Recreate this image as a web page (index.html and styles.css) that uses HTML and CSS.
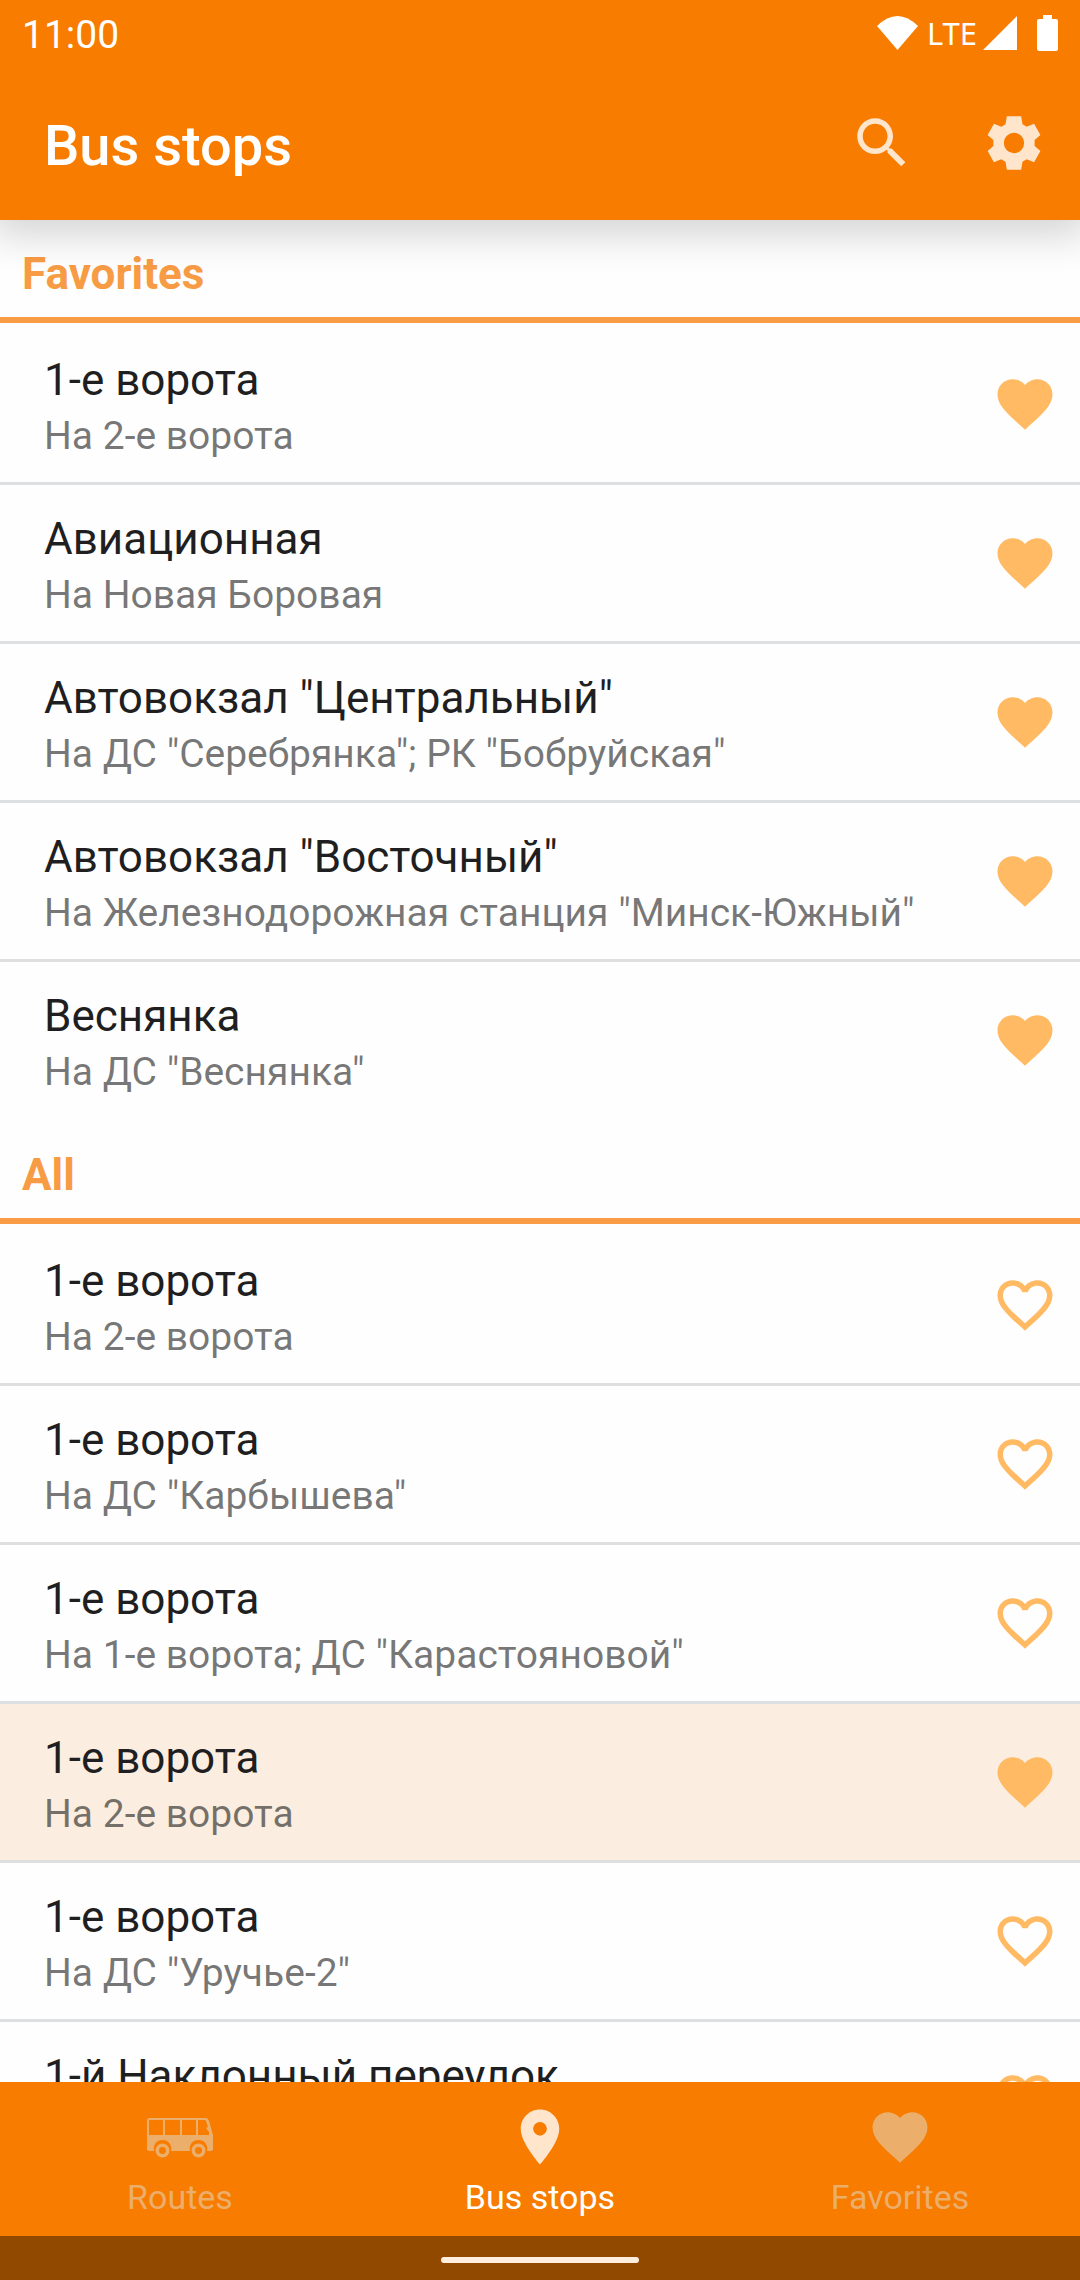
FILE: index.html
```html
<!DOCTYPE html>
<html lang="en">
<head>
<meta charset="utf-8">
<meta name="viewport" content="width=device-width, initial-scale=1">
<title>Bus stops</title>
<link rel="stylesheet" href="styles.css">
</head>
<body>
<svg class="sprite" aria-hidden="true">
  <symbol id="heart" viewBox="0 0 24 24"><path d="M12 21.35l-1.45-1.32C5.4 15.36 2 12.28 2 8.5 2 5.42 4.42 3 7.5 3c1.74 0 3.41.81 4.5 2.09C13.09 3.81 14.76 3 16.5 3 19.58 3 22 5.42 22 8.5c0 3.78-3.4 6.86-8.55 11.54L12 21.35z"/></symbol>
  <symbol id="heart-outline" viewBox="0 0 24 24"><path d="M16.5 3c-1.74 0-3.41.81-4.5 2.09C10.91 3.81 9.24 3 7.5 3 4.42 3 2 5.42 2 8.5c0 3.78 3.4 6.86 8.55 11.54L12 21.35l1.45-1.32C18.6 15.36 22 12.28 22 8.5 22 5.42 19.58 3 16.5 3zm-4.4 15.55l-.1.1-.1-.1C7.14 14.24 4 11.39 4 8.5 4 6.5 5.5 5 7.5 5c1.54 0 3.04.99 3.57 2.36h1.87C13.46 5.99 14.96 5 16.5 5c2 0 3.5 1.5 3.5 3.5 0 2.89-3.14 5.74-7.9 10.05z"/></symbol>
</svg>
<div class="app">
  <header class="top">
    <div class="status">
      <span class="clock">11:00</span>
      <div class="signals">
        <svg class="wifi" viewBox="0 0 41 34" aria-hidden="true"><path d="M0 10Q20.500-10 41 10L20.500 34z"/></svg>
        <span class="lte">LTE</span>
        <svg class="cell" viewBox="0 0 34 34" aria-hidden="true"><path d="M34 0v34H0z"/></svg>
        <svg class="battery" viewBox="0 0 21 36" aria-hidden="true"><path d="M6 0h9v4h4q2 0 2 2v28q0 2-2 2H2q-2 0-2-2V6q0-2 2-2h4z"/></svg>
      </div>
    </div>
    <div class="toolbar">
      <h1 class="title">Bus stops</h1>
      <button class="action" type="button" aria-label="Search"><svg class="icon" viewBox="0 0 24 24"><path d="M15.500 14h-.79l-.28-.27C15.410 12.590 16 11.110 16 9.500 16 5.910 13.090 3 9.500 3S3 5.910 3 9.500 5.910 16 9.500 16c1.610 0 3.090-.59 4.230-1.570l.27.28v.79l5 4.990L20.490 19l-4.990-5zm-6 0C7.010 14 5 11.990 5 9.500S7.010 5 9.500 5 14 7.010 14 9.500 11.990 14 9.500 14z"/></svg></button>
      <button class="action" type="button" aria-label="Settings"><svg class="icon" viewBox="0 0 24 24"><path fill-rule="evenodd" d="M9.400 2.300h5.200l.5 2.900 1.500.9 2.700-1.100 2.300 4.100-2.100 1.800v2.200l2.100 1.800-2.300 4.100-2.700-1.100-1.500.9-.5 2.900H9.400l-.5-2.900-1.500-.9L4.700 19l-2.300-4.100 2.100-1.800v-2.200L2.400 9.100 4.700 5l2.700 1.100 1.500-.9zM12 8.300a3.700 3.700 0 1 0 0 7.400 3.700 3.700 0 0 0 0-7.400z"/></svg></button>
    </div>
  </header>

  <main class="content">
    <section>
      <h2 class="heading">Favorites</h2>
      <ul class="stops">
        <li class="stop"><div class="names"><span class="name">1-е ворота</span><span class="to">На 2-е ворота</span></div><button class="fav" type="button" aria-label="Remove from favorites"><svg class="icon"><use href="#heart"/></svg></button></li>
        <li class="stop"><div class="names"><span class="name">Авиационная</span><span class="to">На Новая Боровая</span></div><button class="fav" type="button" aria-label="Remove from favorites"><svg class="icon"><use href="#heart"/></svg></button></li>
        <li class="stop"><div class="names"><span class="name">Автовокзал "Центральный"</span><span class="to">На ДС "Серебрянка"; РК "Бобруйская"</span></div><button class="fav" type="button" aria-label="Remove from favorites"><svg class="icon"><use href="#heart"/></svg></button></li>
        <li class="stop"><div class="names"><span class="name">Автовокзал "Восточный"</span><span class="to">На Железнодорожная станция "Минск-Южный"</span></div><button class="fav" type="button" aria-label="Remove from favorites"><svg class="icon"><use href="#heart"/></svg></button></li>
        <li class="stop"><div class="names"><span class="name">Веснянка</span><span class="to">На ДС "Веснянка"</span></div><button class="fav" type="button" aria-label="Remove from favorites"><svg class="icon"><use href="#heart"/></svg></button></li>
      </ul>
    </section>
    <section>
      <h2 class="heading">All</h2>
      <ul class="stops">
        <li class="stop"><div class="names"><span class="name">1-е ворота</span><span class="to">На 2-е ворота</span></div><button class="fav" type="button" aria-label="Add to favorites"><svg class="icon"><use href="#heart-outline"/></svg></button></li>
        <li class="stop"><div class="names"><span class="name">1-е ворота</span><span class="to">На ДС "Карбышева"</span></div><button class="fav" type="button" aria-label="Add to favorites"><svg class="icon"><use href="#heart-outline"/></svg></button></li>
        <li class="stop"><div class="names"><span class="name">1-е ворота</span><span class="to">На 1-е ворота; ДС "Карастояновой"</span></div><button class="fav" type="button" aria-label="Add to favorites"><svg class="icon"><use href="#heart-outline"/></svg></button></li>
        <li class="stop marked"><div class="names"><span class="name">1-е ворота</span><span class="to">На 2-е ворота</span></div><button class="fav" type="button" aria-label="Remove from favorites"><svg class="icon"><use href="#heart"/></svg></button></li>
        <li class="stop"><div class="names"><span class="name">1-е ворота</span><span class="to">На ДС "Уручье-2"</span></div><button class="fav" type="button" aria-label="Add to favorites"><svg class="icon"><use href="#heart-outline"/></svg></button></li>
        <li class="stop"><div class="names"><span class="name">1-й Наклонный переулок</span></div><button class="fav" type="button" aria-label="Add to favorites"><svg class="icon"><use href="#heart-outline"/></svg></button></li>
      </ul>
    </section>
  </main>

  <nav class="tabs">
    <a class="tab" href="#routes"><svg class="icon" viewBox="0 0 66 66" aria-hidden="true"><path fill-rule="evenodd" d="M3 14h56q2 0 3 3l4 14v14q0 2-2 2h-4a8.800 8.800 0 1 0-17 0H24a8.800 8.800 0 1 0-17 0H2q-2 0-2-2V17q0-3 3-3zM2 17v14h14V16H3q-1 0-1 1zM18 16v15h15V16zM35 16v15h14V16zM51 16v15h11v-3l-3-4 2-1-2-6q0-1-1-1z"/><g fill="none" stroke="currentColor" stroke-width="3.500"><circle cx="15.500" cy="46.500" r="5.200"/><circle cx="51.500" cy="46.500" r="5.200"/></g></svg><span>Routes</span></a>
    <a class="tab current" href="#stops" aria-current="page"><svg class="icon" viewBox="0 0 24 24" aria-hidden="true"><path d="M12 2C8.130 2 5 5.130 5 9c0 5.250 7 13 7 13s7-7.750 7-13c0-3.870-3.130-7-7-7zm0 9.500a2.500 2.500 0 0 1 0-5 2.500 2.500 0 0 1 0 5z"/></svg><span>Bus stops</span></a>
    <a class="tab" href="#favorites"><svg class="icon" aria-hidden="true"><use href="#heart"/></svg><span>Favorites</span></a>
  </nav>
  <div class="gesture"><span class="pill"></span></div>
</div>
</body>
</html>
```
FILE: styles.css
```css
* { box-sizing: border-box; }

body {
  margin: 0;
  background: #fefefe;
  color: #1f1f21;
  font-family: Roboto, "Noto Sans", sans-serif;
}

h1, h2, ul { margin: 0; padding: 0; }
ul { list-style: none; }

button {
  border: 0;
  padding: 0;
  background: none;
  color: inherit;
  font: inherit;
}

svg { display: block; fill: currentColor; }
.sprite { position: absolute; width: 0; height: 0; }
.icon { width: 66px; height: 66px; }

.app {
  display: flex;
  flex-direction: column;
  height: 100vh;
}

.top {
  flex: none;
  z-index: 1;
  background: #f77c00;
  color: #fff;
  box-shadow: 0 8px 36px 8px rgba(0, 0, 0, 0.16);
}

.status {
  display: flex;
  align-items: center;
  justify-content: space-between;
  height: 66px;
  padding: 0 22px;
}
.clock { padding-top: 4px; font-size: 39px; line-height: 44px; }
.signals { display: flex; align-items: center; }
.wifi { width: 41px; height: 34px; margin-right: 9px; }
.lte { font: 31px/44px "Noto Sans", sans-serif; }
.cell { width: 34px; height: 34px; margin: 0 20px 0 6px; }
.battery { width: 21px; height: 36px; }

.toolbar {
  display: flex;
  align-items: center;
  height: 154px;
  padding-left: 44px;
}
.title { flex: 1; padding-top: 6px; font-size: 56px; font-weight: 500; line-height: 66px; }
.action {
  display: grid;
  place-items: center;
  width: 132px;
  height: 132px;
  color: #ffe5cc;
}

.content { flex: 1; min-height: 0; overflow: hidden; }

.heading {
  height: 103px;
  padding: 28px 22px 0;
  border-bottom: 6px solid #fa9c45;
  color: #f89b45;
  font-size: 44px;
  font-weight: 700;
  line-height: 52px;
}

.stops { padding-top: 3px; }
.stop {
  display: flex;
  align-items: center;
  justify-content: space-between;
  height: 159px;
  padding: 0 22px 0 44px;
  border-bottom: 3px solid #dedfe1;
}
section:first-child .stop:last-child { border-color: transparent; }
.marked { background: #fbeee1; }
.names {
  display: flex;
  flex-direction: column;
  align-self: flex-start;
  gap: 4px;
  padding-top: 28px;
}
.name { font-size: 44px; line-height: 52px; white-space: nowrap; }
.to { color: rgba(0, 0, 0, 0.54); font-size: 39px; line-height: 52px; white-space: nowrap; }
.fav { color: #ffba63; }

.tabs {
  flex: none;
  display: grid;
  grid-template-columns: repeat(3, 1fr);
  height: 154px;
  background: #f77c00;
}
.tab {
  display: flex;
  flex-direction: column;
  align-items: center;
  gap: 7px;
  padding-top: 22px;
  color: #ecae6b;
  font-size: 34px;
  line-height: 40px;
  text-decoration: none;
}
.current { color: #fff; }
.current .icon { color: #ffe5cc; }

.gesture {
  flex: none;
  display: grid;
  place-items: center;
  height: 44px;
  padding-top: 4px;
  background: #914900;
}
.pill { width: 198px; height: 6px; border-radius: 3px; background: #ffeedd; }
```
